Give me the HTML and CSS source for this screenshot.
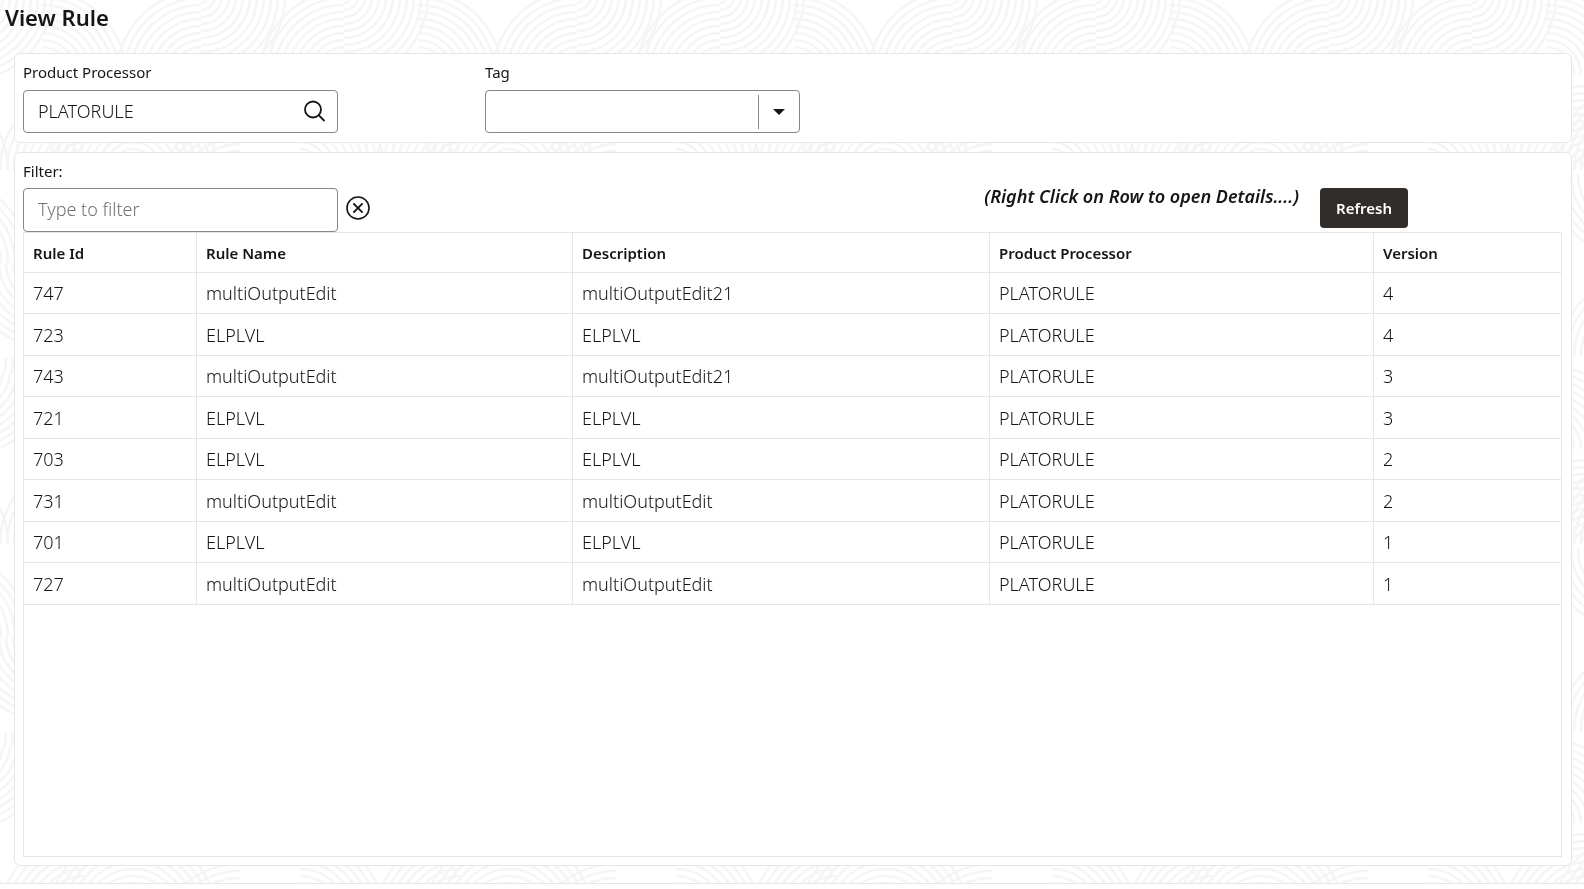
FILE: index.html
```
<!DOCTYPE html>
<html lang="en">
<head>
  <meta charset="UTF-8">
  <title>View Rule</title>
  <link rel="stylesheet" href="styles.css">
</head>
<body>

  <svg class="page-pattern" aria-hidden="true">
    <defs>
      <!-- quarter fan of rings, opening up and to the right -->
      <g id="fan" fill="none" stroke="#f5f5f5" stroke-width="2.6">
        <path d="M0-7A7 7 0 0 1 7 0M0-14A14 14 0 0 1 14 0M0-21A21 21 0 0 1 21 0M0-28A28 28 0 0 1 28 0M0-35A35 35 0 0 1 35 0M0-42A42 42 0 0 1 42 0M0-49A49 49 0 0 1 49 0M0-56A56 56 0 0 1 56 0M0-63A63 63 0 0 1 63 0M0-70A70 70 0 0 1 70 0M0-77A77 77 0 0 1 77 0M0-84A84 84 0 0 1 84 0"/>
      </g>
      <g id="tile">
        <use href="#fan" transform="translate(42 75)"/>
        <use href="#fan" transform="translate(201 75) scale(-1 1)"/>
        <use href="#fan" transform="translate(344 75) scale(-1 1)"/>
        <use href="#fan" transform="translate(201 -4) scale(1 -1)"/>
        <use href="#fan" transform="translate(344 -4) scale(1 -1)"/>
        <use href="#fan" transform="translate(84 170) scale(-1 1)"/>
        <use href="#fan" transform="translate(133 170) scale(-1 1)"/>
        <use href="#fan" transform="translate(133 170)"/>
        <use href="#fan" transform="translate(240 200) scale(-1 1)"/>
        <use href="#fan" transform="translate(300 170)"/>
        <use href="#fan" transform="translate(-55 263)"/>
        <use href="#fan" transform="translate(48 263) scale(-1 -1)"/>
        <use href="#fan" transform="translate(130 174) scale(-1 -1)"/>
        <use href="#fan" transform="translate(140 357) scale(-1 1)"/>
        <use href="#fan" transform="translate(-64 358) scale(1 -1)"/>
      </g>
      <pattern id="waves" width="376" height="374" patternUnits="userSpaceOnUse">
        <use href="#tile"/>
        <use href="#tile" x="376"/>
        <use href="#tile" x="-376"/>
        <use href="#tile" y="374"/>
      </pattern>
    </defs>
    <rect width="100%" height="100%" fill="url(#waves)"/>
  </svg>

  <main class="page">
    <h1 class="page-title">View Rule</h1>

    <form class="panel search-panel">
      <div class="field">
        <label for="product-processor">Product Processor</label>
        <div class="input-box">
          <input type="text" id="product-processor" value="PLATORULE">
          <button type="button" class="icon-button search-button" aria-label="Search">
            <svg width="24" height="24" viewBox="0 0 24 24" fill="none" stroke="#161513" stroke-width="1.8">
              <circle cx="10" cy="9.5" r="8"/>
              <path d="M15.7 15.2L21.5 21"/>
            </svg>
          </button>
        </div>
      </div>
      <div class="field">
        <label for="tag">Tag</label>
        <div class="input-box">
          <select id="tag">
            <option></option>
          </select>
          <svg class="select-arrow" width="12" height="6" viewBox="0 0 12 6"><path d="M0 0H12L6 6Z" fill="#161513"/></svg>
        </div>
      </div>
    </form>

    <section class="panel rules-panel">
      <div class="toolbar">
        <div class="field">
          <label for="filter">Filter:</label>
          <div class="input-box filter-box">
            <input type="text" id="filter" placeholder="Type to filter">
          </div>
        </div>
        <button type="button" class="icon-button clear-button" aria-label="Clear filter">
          <svg width="24" height="24" viewBox="0 0 24 24" fill="none" stroke="#161513" stroke-width="1.6">
            <circle cx="12" cy="12" r="11"/>
            <path d="M7.4 7.4L16.6 16.6M16.6 7.4L7.4 16.6" stroke-width="2"/>
          </svg>
        </button>
        <em class="hint">(Right Click on Row to open Details....)</em>
        <button type="button" class="refresh-button">Refresh</button>
      </div>

      <div class="table-box">
        <table class="rules-table">
          <colgroup>
            <col class="col-id">
            <col class="col-name">
            <col class="col-description">
            <col class="col-processor">
            <col>
          </colgroup>
          <thead>
            <tr><th>Rule Id</th><th>Rule Name</th><th>Description</th><th>Product Processor</th><th>Version</th></tr>
          </thead>
          <tbody>
            <tr><td>747</td><td>multiOutputEdit</td><td>multiOutputEdit21</td><td>PLATORULE</td><td>4</td></tr>
            <tr><td>723</td><td>ELPLVL</td><td>ELPLVL</td><td>PLATORULE</td><td>4</td></tr>
            <tr><td>743</td><td>multiOutputEdit</td><td>multiOutputEdit21</td><td>PLATORULE</td><td>3</td></tr>
            <tr><td>721</td><td>ELPLVL</td><td>ELPLVL</td><td>PLATORULE</td><td>3</td></tr>
            <tr><td>703</td><td>ELPLVL</td><td>ELPLVL</td><td>PLATORULE</td><td>2</td></tr>
            <tr><td>731</td><td>multiOutputEdit</td><td>multiOutputEdit</td><td>PLATORULE</td><td>2</td></tr>
            <tr><td>701</td><td>ELPLVL</td><td>ELPLVL</td><td>PLATORULE</td><td>1</td></tr>
            <tr><td>727</td><td>multiOutputEdit</td><td>multiOutputEdit</td><td>PLATORULE</td><td>1</td></tr>
          </tbody>
        </table>
      </div>
    </section>
  </main>

  <footer class="page-footer"></footer>

</body>
</html>
```
FILE: styles.css
```
* {
  box-sizing: border-box;
}

body {
  margin: 0;
  min-height: 100vh;
  display: flex;
  flex-direction: column;
  font-family: "Noto Sans", "Open Sans", sans-serif;
  font-size: 18px;
  color: #161513;
  background: #fff;
}

.page-pattern {
  position: fixed;
  top: 0;
  left: 0;
  width: 100%;
  height: 100%;
  z-index: -1;
}

.page {
  flex: 1;
  display: flex;
  flex-direction: column;
  padding-bottom: 17px;
}

.page-title {
  margin: 0;
  padding: 1px 5px 20px;
  font-size: 22px;
  font-weight: 600;
  line-height: 32px;
}

.panel {
  margin: 0 12px 9px 14px;
  background: #fff;
  border: 1px solid #e6e6e6;
  border-radius: 6px;
}

.search-panel {
  display: flex;
  gap: 147px;
  padding: 7px 8px 9px;
}

.rules-panel {
  flex: 1;
  display: flex;
  flex-direction: column;
  margin-bottom: 0;
  padding: 7px 9px 8px 8px;
}

.field {
  width: 315px;
}

.field label {
  display: block;
  font-size: 15px;
  line-height: 22px;
  margin-bottom: 7px;
}

.rules-panel .field label {
  margin-bottom: 6px;
}

.input-box {
  position: relative;
  display: flex;
  align-items: center;
  height: 43px;
  border: 1px solid #8b8580;
  border-radius: 4px;
  background: #fff;
}

.filter-box {
  height: 44px;
}

.input-box input,
.input-box select {
  flex: 1;
  min-width: 0;
  height: 100%;
  padding: 0 14px 2px;
  border: 0;
  outline: none;
  background: transparent;
  font: inherit;
  font-weight: 300;
  color: inherit;
}

.input-box input::placeholder {
  color: #76716d;
}

.input-box select {
  appearance: none;
}

.select-arrow {
  box-sizing: content-box;
  padding: 14px;
  border-left: 1px solid #8b8580;
  position: absolute;
  right: 0;
  pointer-events: none;
}

.icon-button {
  display: flex;
  padding: 0;
  border: 0;
  background: none;
  cursor: pointer;
}

.search-button {
  margin-right: 10px;
}

.toolbar {
  display: flex;
  align-items: flex-start;
}

.clear-button {
  margin: 36px 0 0 8px;
}

.hint {
  margin: 23px 21px 0 auto;
  font-weight: 600;
  line-height: 26px;
}

.refresh-button {
  width: 88px;
  height: 40px;
  margin: 28px 154px 0 0;
  border: 0;
  border-radius: 4px;
  background: #312d2a;
  color: #fff;
  font: inherit;
  font-size: 15px;
  font-weight: 600;
  cursor: pointer;
}

.table-box {
  flex: 1;
  border: 1px solid #e6e6e6;
}

.rules-table {
  width: 100%;
  table-layout: fixed;
  border-collapse: separate;
  border-spacing: 0;
}

.col-id {
  width: 173px;
}

.col-name {
  width: 376px;
}

.col-description {
  width: 417px;
}

.col-processor {
  width: 384px;
}

.rules-table th,
.rules-table td {
  height: 41px;
  padding: 0 9px;
  text-align: left;
  border-right: 1px solid #e6e6e6;
  border-bottom: 1px solid #e6e6e6;
}

.rules-table th:last-child,
.rules-table td:last-child {
  border-right: 0;
}

.rules-table th {
  height: 40px;
  font-size: 15px;
  font-weight: 600;
}

.rules-table td {
  font-weight: 300;
}

.rules-table tr:nth-child(even) td {
  height: 42px;
}

.page-footer {
  height: 6px;
  background: #fff;
  border-top: 1px solid #e6e6e6;
}
```
